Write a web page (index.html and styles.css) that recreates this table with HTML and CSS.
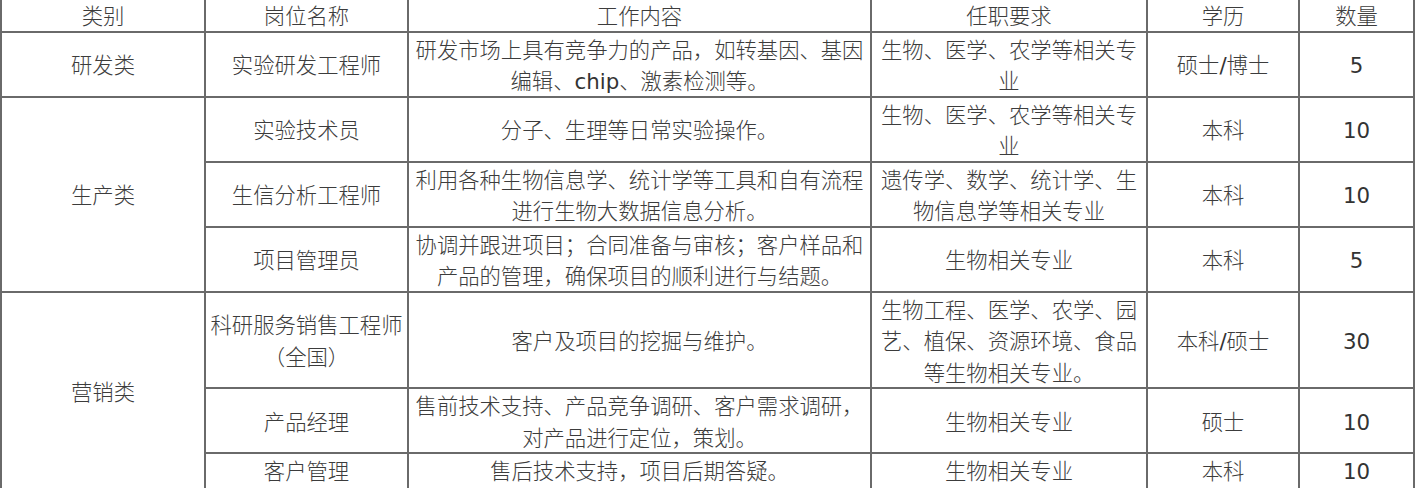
FILE: index.html
```html
<!DOCTYPE html>
<html lang="zh-CN">
<head>
<meta charset="utf-8">
<title>招聘职位</title>
<link rel="stylesheet" href="styles.css">
</head>
<body>
<table class="jobs">
  <colgroup>
    <col class="c-cat">
    <col class="c-name">
    <col class="c-work">
    <col class="c-req">
    <col class="c-edu">
    <col class="c-num">
  </colgroup>
  <tbody>
    <tr class="head">
      <td>类别</td>
      <td>岗位名称</td>
      <td>工作内容</td>
      <td>任职要求</td>
      <td>学历</td>
      <td>数量</td>
    </tr>
    <tr>
      <td>研发类</td>
      <td>实验研发工程师</td>
      <td>研发市场上具有竞争力的产品，如转基因、基因编辑、<span class="latin">chip</span>、激素检测等。</td>
      <td>生物、医学、农学等相关专业</td>
      <td>硕士<span class="latin">/</span>博士</td>
      <td class="num">5</td>
    </tr>
    <tr>
      <td rowspan="3">生产类</td>
      <td>实验技术员</td>
      <td>分子、生理等日常实验操作。</td>
      <td>生物、医学、农学等相关专业</td>
      <td>本科</td>
      <td class="num">10</td>
    </tr>
    <tr>
      <td>生信分析工程师</td>
      <td>利用各种生物信息学、统计学等工具和自有流程进行生物大数据信息分析。</td>
      <td>遗传学、数学、统计学、生物信息学等相关专业</td>
      <td>本科</td>
      <td class="num">10</td>
    </tr>
    <tr>
      <td>项目管理员</td>
      <td>协调并跟进项目；合同准备与审核；客户样品和产品的管理，确保项目的顺利进行与结题。</td>
      <td>生物相关专业</td>
      <td>本科</td>
      <td class="num">5</td>
    </tr>
    <tr>
      <td rowspan="3">营销类</td>
      <td>科研服务销售工程师（全国）</td>
      <td>客户及项目的挖掘与维护。</td>
      <td>生物工程、医学、农学、园艺、植保、资源环境、食品等生物相关专业。</td>
      <td>本科<span class="latin">/</span>硕士</td>
      <td class="num">30</td>
    </tr>
    <tr>
      <td>产品经理</td>
      <td>售前技术支持、产品竞争调研、客户需求调研，对产品进行定位，策划。</td>
      <td>生物相关专业</td>
      <td>硕士</td>
      <td class="num">10</td>
    </tr>
    <tr class="last">
      <td>客户管理</td>
      <td>售后技术支持，项目后期答疑。</td>
      <td>生物相关专业</td>
      <td>本科</td>
      <td class="num">10</td>
    </tr>
  </tbody>
</table>
</body>
</html>
```

FILE: styles.css
```css
html, body {
  margin: 0;
  padding: 0;
  background: #ffffff;
}

.jobs {
  border-collapse: collapse;
  table-layout: fixed;
  width: 1414px;
  margin-top: -3px;
  font-family: "Noto Sans CJK SC", sans-serif;
  font-size: 21.33px;
  font-weight: 300;
  color: #3c3c3c;
}

.c-cat { width: 204px; }
.c-name { width: 203px; }
.c-work { width: 463px; }
.c-req { width: 276px; }
.c-edu { width: 152px; }
.c-num { width: 115px; }

.jobs td {
  border: 2px solid #6a6a6a;
  padding: 0 4px;
  text-align: center;
  vertical-align: middle;
  line-height: 31.5px;
}

.jobs .latin {
  font-family: "DejaVu Sans", Verdana, sans-serif;
  font-weight: 400;
  color: #333333;
  line-height: 1;
}

.jobs .num {
  font-family: "DejaVu Sans", Verdana, sans-serif;
  font-weight: 400;
  color: #333333;
  padding-top: 5px;
  line-height: 26.5px;
}

.jobs .last td {
  vertical-align: top;
  padding-bottom: 4px;
}
```
